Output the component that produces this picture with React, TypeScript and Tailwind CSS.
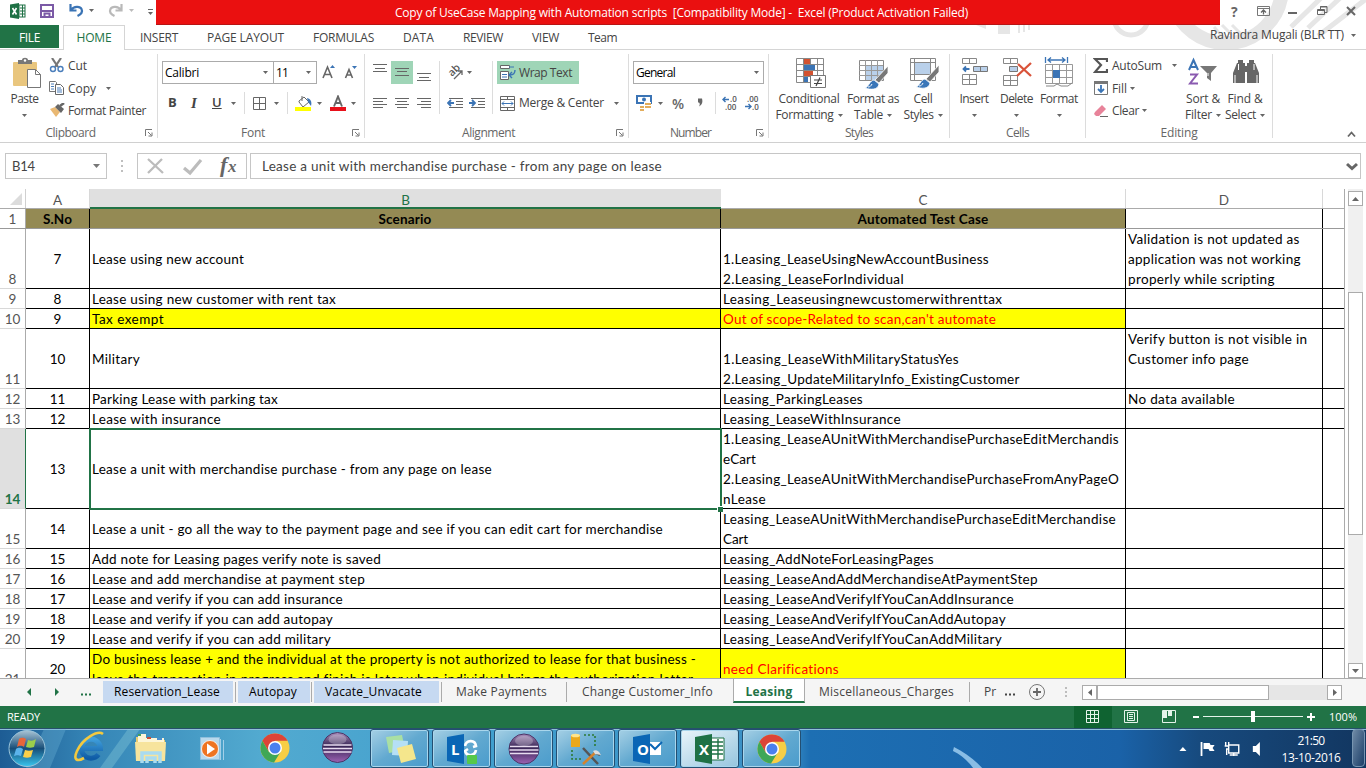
import { useLayoutEffect, useRef, useState } from "react";
import type { ReactNode } from "react";

const UI = "font-['Open_Sans','Noto_Sans',sans-serif]";
const CELL = "font-[Lato,'Open_Sans',sans-serif]";

/* A run of text whose tracking is adjusted so that it fills exactly `w` pixels. */
function T({ w, children, className = "" }: { w: number; children: string; className?: string }) {
  const ref = useRef<HTMLSpanElement>(null);
  const [ls, setLs] = useState(0);
  useLayoutEffect(() => {
    if (ref.current) setLs((w - ref.current.getBoundingClientRect().width) / children.length);
  }, []);
  return (
    <span ref={ref} className={`inline-block shrink-0 whitespace-pre ${className}`} style={{ letterSpacing: ls }}>
      {children}
    </span>
  );
}

/* Icon canvas: coordinates inside are window pixels. */
function Ic({ x, y, w, h, c = "", children }: { x: number; y: number; w: number; h: number; c?: string; children: ReactNode }) {
  return (
    <svg className={`block shrink-0 ${c}`} width={w} height={h} viewBox={`${x} ${y} ${w} ${h}`} fill="none">
      {children}
    </svg>
  );
}

const Arrow = ({ c = "" }: { c?: string }) => (
  <svg className={`block shrink-0 ${c}`} width="5" height="3" viewBox="0 0 5 3"><path d="M0 0h5L2.5 3z" fill="#666" /></svg>
);
const Sep = ({ c = "" }: { c?: string }) => <div className={`h-[22px] w-px shrink-0 bg-[#dcdcdc] ${c}`} />;

function Group({ label, w, c, launch, children }: { label: string; w: number; c: string; launch?: boolean; children: ReactNode }) {
  return (
    <div className={`flex h-full shrink-0 pt-1 ${c}`}>
      <div className="flex min-w-0 flex-1 flex-col">
        <div className="h-[71px]">{children}</div>
        <div className="mt-px flex h-[18px] items-center text-[#666]">
          <div className="flex flex-1 justify-center"><T w={w}>{label}</T></div>
          {launch && (
            <svg className="mx-1 shrink-0" width="8" height="8" viewBox="0 0 8 8" fill="none" stroke="#777"><path d="M.5 7V.5H7M3 3l3.500 3.500M7 3.500V7H3.500" /></svg>
          )}
        </div>
      </div>
      <div className="h-[84px] w-px bg-[#dcdcdc]" />
    </div>
  );
}

function Lines({ x, y, rows, c = "" }: { x: number; y: number; rows: number[][]; c?: string }) {
  return (
    <Ic x={x} y={y} w={14} h={14} c={c}>
      {rows.map(([a, b, yy], i) => <rect key={i} x={x + a} y={y + yy} width={b} height="1" fill="#666" />)}
    </Ic>
  );
}

function Big({ c, icon, a, aw, b, bw }: { c: string; icon: ReactNode; a: string; aw: number; b?: string; bw?: number }) {
  return (
    <div className={`flex shrink-0 flex-col items-center ${c}`}>
      <div className="flex h-[37px] items-end pb-[2px]">{icon}</div>
      <div className="flex h-4 items-center"><T w={aw}>{a}</T></div>
      <div className="flex h-4 items-center gap-1">
        {b && <T w={bw || 0}>{b}</T>}
        <Arrow />
      </div>
    </div>
  );
}

function Brush({ x, y }: { x: number; y: number }) {
  return (
    <g transform={`translate(${x} ${y})`}>
      <path d="M21 0v7l-9 10-4-3z" fill="#777" stroke="#fff" strokeWidth=".8" />
      <path d="M7 14l5 4c-1 6-8 6-14 4 4-1 4-7 9-8z" fill="#3a76b8" stroke="#fff" strokeWidth=".8" />
      <path d="M5 18c-1 2-2 3-4 3" stroke="#fff" />
    </g>
  );
}

function TitleBar() {
  return (
    <div className="flex h-[25px]">
      <Ic x={0} y={0} w={156} h={25}>
        <path d="M10 4.500L19 3v16l-9-1.500z" fill="#1e7145" />
        <rect x="19" y="5" width="6" height="12" stroke="#1e7145" fill="#fff" />
        <path d="M20 8h5M20 11h5M20 14h5M22.500 5v12" stroke="#1e7145" />
        <path d="M12.500 8l4 6.500M16.500 8l-4 6.500" stroke="#fff" strokeWidth="1.600" />
        <path d="M41 5h12v12H41z" stroke="#7b5aa6" strokeWidth="2" />
        <path d="M41 11h12M44.500 17v-3.500h5V17" stroke="#7b5aa6" strokeWidth="2" />
        <path d="M70.500 4v6.500h6M71 10c3-4 9-4 10.500-1 1.500 3 0 5-4 7" stroke="#3b74b5" strokeWidth="2.200" />
        <path d="M89 9h5l-2.500 3z" fill="#666" />
        <path d="M121.500 4v6.500h-6M121 10c-3-4-9-4-10.500-1-1.500 3 0 5 4 7" stroke="#b9b9b9" strokeWidth="2.200" />
        <path d="M129 9h5l-2.500 3z" fill="#bbb" />
        <path d="M148 9.500h5" stroke="#666" /><path d="M148 12h5l-2.500 3z" fill="#666" />
      </Ic>
      <div className="flex w-[1064px] items-center justify-center border-b border-[#b81414] bg-[#ea1010] pt-[2px] text-white">
        <T w={573} className="mr-[13px]">{"Copy of UseCase Mapping with Automation scripts  [Compatibility Mode] -  Excel (Product Activation Failed)"}</T>
      </div>
      <Ic x={1220} y={0} w={146} h={25}>
        <text x="1231" y="16.500" fontSize="14" fontWeight="700" fill="#666" fontFamily="Open Sans">?</text>
        <path d="M1257.500 6.500h12v9h-12zM1257 8.500h13" stroke="#777" />
        <path d="M1263.500 14.500v-4M1261 12.500l2.500-2.500 2.500 2.500" stroke="#666" strokeWidth="1.300" />
        <path d="M1288 13h9" stroke="#666" strokeWidth="2" />
        <path d="M1317.500 9.500h7v5h-7zM1317 10.500h8M1320.500 9V6.500h6.500v6h-2M1320 7h7" stroke="#666" />
        <path d="M1347 7l8 8M1355 7l-8 8" stroke="#666" strokeWidth="2" />
      </Ic>
    </div>
  );
}

const menu: [string, number, string][] = [
  ["INSERT", 38, "ml-[15px]"], ["PAGE LAYOUT", 77, "ml-[29px]"], ["FORMULAS", 61, "ml-[29px]"],
  ["DATA", 31, "ml-[29px]"], ["REVIEW", 40, "ml-[29px]"], ["VIEW", 27, "ml-[29px]"], ["Team", 29, "ml-[29px]"],
];

function MenuRow() {
  return (
    <div className="flex h-[25px] items-center border-b border-[#d5d5d5] pt-px">
      <div className="-mt-px flex h-full w-[59px] items-center justify-center self-start bg-[#217346] pt-[2px] text-white"><T w={21}>FILE</T></div>
      <div className="z-10 -mt-px ml-1 flex h-[25px] w-[62px] shrink-0 items-center justify-center self-start border border-b-0 border-[#d5d5d5] bg-white text-[#217346]"><T w={35}>HOME</T></div>
      {menu.map(([t, w, c]) => <T key={t} w={w} className={c}>{t}</T>)}
      <div className="flex flex-1 items-center justify-end pb-[5px]">
        <T w={134}>Ravindra Mugali (BLR TT)</T>
        <Arrow c="ml-[7px] mr-[10px]" />
      </div>
    </div>
  );
}

function Ribbon() {
  return (
    <div className="flex h-[93px] border-b border-[#d0d0d0]">
      <Group label="Clipboard" w={50} c="w-[158px]" launch>
        <div className="flex">
          <Big c="w-[49px]" a="Paste" aw={28} icon={
            <Ic x={12} y={57} w={30} h={32} c="ml-1">
              <rect x="13" y="62" width="24" height="24" rx="1" fill="#e9c67e" />
              <path d="M18 64v-4h4c0-3 6-3 6 0h4v4z" fill="#777" /><circle cx="25" cy="60.500" r="1.200" fill="#fff" />
              <path d="M27.500 69.500h8l5 5v13h-13z" fill="#fff" stroke="#777" /><path d="M35.500 69.500v5h5" stroke="#777" />
            </Ic>} />
          <div className="flex flex-col">
            <div className="flex h-[23px] items-center">
              <Ic x={49} y={57} w={15} h={15}>
                <path d="M52 57l6 9M61 57l-6 9" stroke="#777" strokeWidth="2.200" />
                <circle cx="53" cy="68" r="2.500" stroke="#4a7ebb" strokeWidth="1.400" /><circle cx="60.500" cy="68" r="2.500" stroke="#4a7ebb" strokeWidth="1.400" />
              </Ic>
              <T w={19} className="ml-1">Cut</T>
            </div>
            <div className="flex h-[23px] items-center">
              <Ic x={49} y={80} w={15} h={15}>
                <path d="M49.500 80.500h6l1 1v9h-7z" fill="#fff" stroke="#777" /><path d="M51 83h3M51 85.500h3M51 88h3" stroke="#4a7ebb" />
                <path d="M55.500 83.500h5l3 3v7h-8z" fill="#fff" stroke="#666" /><path d="M57 87h4M57 89h5M57 91h5" stroke="#4a7ebb" />
              </Ic>
              <T w={28} className="ml-1">Copy</T><Arrow c="ml-[10px]" />
            </div>
            <div className="-mt-px flex h-[23px] items-center">
              <Ic x={49} y={103} w={16} h={15}>
                <path d="M50 109l5-2 5 5-4 5z" fill="#e9b873" /><path d="M55 107l3-3 6 5-3 4z" fill="#666" /><path d="M60 106l4-3" stroke="#666" strokeWidth="2.500" />
              </Ic>
              <T w={78} className="ml-[3px]">Format Painter</T>
            </div>
          </div>
        </div>
      </Group>

      <Group label="Font" w={24} c="w-[207px]" launch>
        <div className="flex h-full flex-col pt-[7px]">
          <div className="ml-1 flex h-[23px]">
            <div className="flex w-[112px] items-center justify-between border border-[#ababab] bg-white pr-[5px] pl-[2px] text-black"><T w={34}>Calibri</T><Arrow /></div>
            <div className="-ml-px flex w-[44px] items-center justify-between border border-[#ababab] bg-white pr-[5px] pl-[2px] text-black"><T w={12}>11</T><Arrow /></div>
            <Ic x={322} y={61} w={36} h={22} c="ml-[5px]">
              <path d="M323 78l4.500-11 4.500 11M324.500 74.500h6.500" stroke="#666" strokeWidth="1.600" /><path d="M330 68l2.500-3 2.500 3z" fill="#3b74b5" />
              <path d="M345.500 78l3.500-8.500 3.500 8.500M347 75h4.500" stroke="#666" strokeWidth="1.600" /><path d="M352 66h5l-2.500 3z" fill="#3b74b5" />
            </Ic>
          </div>
          <div className="mt-2 flex h-[22px] items-center">
            <span className="ml-[10px] w-[22px] text-[13px] font-bold">B</span>
            <span className="w-[22px] pl-px font-['Liberation_Serif',serif] text-[15px] font-bold italic">I</span>
            <span className="w-[18px] text-[13px] font-semibold underline">U</span>
            <Arrow c="ml-[1px]" /><Sep c="ml-[8px]" />
            <Ic x={252} y={96} w={15} h={15} c="ml-[7px]"><path d="M253.500 97.500h12v12h-12zM259.500 97v13M253 103.500h13" stroke="#666" /></Ic>
            <Arrow c="ml-[7px]" /><Sep c="ml-[8px]" />
            <Ic x={295} y={95} w={18} h={17} c="ml-[7px]">
              <path d="M299 101l5-4 5 5-6 5-4-5zM302 101v-5" fill="#fff" stroke="#666" /><path d="M307 98c4 1 5 4 4 8l-3-4z" fill="#3b74b5" /><rect x="295" y="107" width="16" height="4" fill="#ff0" />
            </Ic>
            <Arrow c="ml-[4px]" />
            <Ic x={329} y={95} w={16} h={17} c="ml-[8px]"><path d="M333 106.500l4-10 4 10M334.500 103h5" stroke="#666" strokeWidth="1.900" /><rect x="329" y="107" width="16" height="4" fill="#e8101a" /></Ic>
            <Arrow c="ml-[5px]" />
          </div>
        </div>
      </Group>

      <Group label="Alignment" w={53} c="w-[264px]" launch>
        <div className="flex h-full pt-[7px]">
          <div className="flex w-[74px] flex-col">
            <div className="flex h-[23px]">
              <Lines c="ml-2" x={373} y={61} rows={[[0, 14, 3], [2, 10, 7], [0, 14, 10]]} />
              <div className="ml-1 flex w-[22px] justify-center bg-[#9fd5b7] pt-[6px]"><Lines x={0} y={0} rows={[[0, 14, 1], [2, 10, 4], [0, 14, 8]]} /></div>
              <Lines c="ml-1 mt-2" x={417} y={61} rows={[[0, 14, 4], [2, 10, 8], [0, 14, 11]]} />
            </div>
            <div className="mt-2 flex h-[22px] items-center gap-2 pl-2">
              <Lines x={0} y={0} rows={[[0, 14, 2], [0, 10, 5], [0, 14, 8], [0, 10, 11]]} />
              <Lines x={0} y={0} rows={[[0, 14, 2], [2, 10, 5], [0, 14, 8], [2, 10, 11]]} />
              <Lines x={0} y={0} rows={[[0, 14, 2], [4, 10, 5], [0, 14, 8], [4, 10, 11]]} />
            </div>
          </div>
          <div className="h-[53px] w-px bg-[#dcdcdc]" />
          <div className="flex w-[52px] flex-col">
            <div className="flex h-[23px] items-center">
              <Ic x={446} y={61} w={20} h={23} c="ml-[6px]">
                <text x="0" y="0" transform="translate(452 77) rotate(-45)" fontSize="10.500" fontWeight="600" fill="#555" fontFamily="Open Sans">ab</text>
                <path d="M454 79l8-8M462 75v-4h-4" stroke="#666" strokeWidth="1.300" />
              </Ic><Arrow c="ml-[1px]" />
            </div>
            <div className="mt-2 flex h-[22px] items-center gap-[6px] pl-[7px]">
              <Ic x={447} y={96} w={16} h={14}><path d="M449 98.500h14M456 101.500h7M456 104.500h7M449 107.500h14" stroke="#666" /><path d="M448 103h6M451 100l-3 3 3 3" stroke="#3b74b5" strokeWidth="1.800" /></Ic>
              <Ic x={469} y={96} w={16} h={14}><path d="M471 98.500h14M478 101.500h7M478 104.500h7M471 107.500h14" stroke="#666" /><path d="M469 103h6M472 100l3 3-3 3" stroke="#3b74b5" strokeWidth="1.800" /></Ic>
            </div>
          </div>
          <div className="h-[53px] w-px bg-[#dcdcdc]" />
          <div className="ml-1 flex flex-col">
            <div className="flex h-[23px] w-[82px] items-center bg-[#9fd5b7] pl-[3px]">
              <Ic x={500} y={63} w={16} h={17}>
                <path d="M500.500 64.500h9v3h-9zM500.500 70.500h8v8h-8z" fill="#fff" stroke="#666" /><path d="M509 66h5M502 73.500h5M502 76h5" stroke="#3b74b5" />
                <path d="M515 69c0 4-2 5-5 5M512 71l-3 3 3 3" stroke="#3b74b5" strokeWidth="1.400" />
              </Ic>
              <T w={53} className="ml-[3px]">Wrap Text</T>
            </div>
            <div className="mt-2 flex h-[22px] items-center pl-[3px]">
              <Ic x={500} y={95} w={16} h={15}>
                <path d="M500.500 95.500h14v14h-14zM500 98.500h15M500 106.500h15M507.500 95v4M507.500 106v4" stroke="#666" /><path d="M502 102.500h11M504 100.500l-2 2 2 2M511 100.500l2 2-2 2" stroke="#3b74b5" />
              </Ic>
              <T w={85} className="ml-[3px]">{"Merge & Center"}</T><Arrow c="ml-[10px]" />
            </div>
          </div>
        </div>
      </Group>

      <Group label="Number" w={41} c="w-[140px]" launch>
        <div className="flex h-full flex-col pt-[7px]">
          <div className="ml-1 flex h-[23px] w-[131px] items-center justify-between border border-[#ababab] bg-white pr-1 pl-[2px] text-black"><T w={39}>General</T><Arrow /></div>
          <div className="mt-2 flex h-[22px] items-center">
            <Ic x={636} y={95} w={17} h={16} c="ml-[7px]">
              <path d="M637 96h14v7h-14z" stroke="#3b74b5" strokeWidth="2" /><circle cx="644" cy="99.500" r="2" fill="#3b74b5" />
              <path d="M644 103.500h7M645 106.500h6" stroke="#fff" strokeWidth="3" /><path d="M645 104h6M645 107h6M640 107h4M640 110h4" stroke="#e3ad5c" strokeWidth="2" />
            </Ic>
            <Arrow c="ml-[5px]" />
            <span className="ml-[9px] w-[24px] text-[14px] font-semibold text-[#666]">%</span>
            <Ic x={696} y={97} w={7} h={12}><path d="M698 98.500h4c1 4 0 6-3 8 1-2 1-3 0-4h-1z" fill="#666" /></Ic>
            <Sep c="ml-[12px]" />
            <div className="ml-[6px] flex gap-[7px]">
              <Ic x={722} y={94} w={16} h={18}>
                <g fontSize="8" fontWeight="600" fill="#555" fontFamily="Open Sans"><text x="730" y="102">.0</text><text x="725" y="110">.00</text></g>
                <path d="M723 99.500h6M725.500 97l-2.500 2.500 2.500 2.500" stroke="#3b74b5" strokeWidth="1.400" />
              </Ic>
              <Ic x={745} y={94} w={16} h={18}>
                <g fontSize="8" fontWeight="600" fill="#555" fontFamily="Open Sans"><text x="747" y="102">.00</text><text x="752" y="110">.0</text></g>
                <path d="M745 106.500h6M748.500 104l2.500 2.500-2.500 2.500" stroke="#3b74b5" strokeWidth="1.400" />
              </Ic>
            </div>
          </div>
        </div>
      </Group>

      <Group label="Styles" w={28} c="w-[181px]">
        <div className="flex">
          <Big c="ml-[3px] w-[74px]" a="Conditional" aw={61} b="Formatting" bw={58} icon={
            <Ic x={795} y={57} w={30} h={32} c="mr-px ml-1">
              <path d="M795.500 58.500h27v24h-27zM795 64.500h28M795 70.500h28M795 76.500h28M802.500 58v25M809.500 58v25M816.500 58v25" stroke="#888" fill="#fff" />
              <path d="M803 59h6v5h-6zM803 71h9v5h-9z" fill="#d35230" /><path d="M803 65h11v5h-11zM803 77h4v5h-4z" fill="#3b74b5" />
              <path d="M809.500 75.500h15v12h-15z" fill="#fff" stroke="#777" /><path d="M813 80h8M813 83.500h8M819 77.500l-4 8.500" stroke="#444" strokeWidth="1.200" />
            </Ic>} />
          <Big c="ml-px w-[52px]" a="Format as" aw={52} b="Table" bw={29} icon={
            <Ic x={859} y={57} w={31} h={32}>
              <path d="M860.500 60.500h24v20h-24z" fill="#fff" stroke="#888" /><path d="M866 66h18v14h-18z" fill="#b9d0ea" />
              <path d="M860 65.500h24M860 70.500h24M860 75.500h24M866.500 60v20M872.500 60v20M878.500 60v20" stroke="#999" /><Brush x={868} y={66} />
            </Ic>} />
          <Big c="w-[48px]" a="Cell" aw={19} b="Styles" bw={30} icon={
            <Ic x={909} y={57} w={31} h={32} c="ml-[2px]">
              <path d="M910.500 58.500h25v22h-25zM910 62.500h25M910 74.500h25M914.500 58v22M930.500 58v22" fill="#fff" stroke="#888" /><path d="M915 63h15v11h-15z" fill="#b9d0ea" /><Brush x={918} y={65} />
            </Ic>} />
        </div>
      </Group>

      <Group label="Cells" w={23} c="w-[136px]">
        <div className="flex">
          <Big c="ml-[4px] w-[40px]" a="Insert" aw={29} icon={
            <Ic x={961} y={57} w={28} h={32} c="ml-[2px]">
              <path d="M962.500 58.500h14v5h-14zM969.500 58v5M962.500 74.500h14v10h-14zM962 79.500h14M969.500 74v10" stroke="#888" /><path d="M973.500 66.500h14v5h-14zM980.500 66v6" fill="#b9d0ea" stroke="#777" />
              <path d="M963.500 69h6M966 66.500l-2.500 2.500 2.500 2.500" stroke="#3b74b5" strokeWidth="1.800" />
            </Ic>} />
          <Big c="ml-px w-[43px]" a="Delete" aw={33} icon={
            <Ic x={1003} y={57} w={30} h={32} c="ml-[2px]">
              <path d="M1003.500 58.500h14v5h-14zM1010.500 58v5M1003.500 75.500h14v10h-14zM1003 80.500h14M1010.500 75v10" stroke="#888" /><path d="M1009.500 66.500h8v5h-8z" fill="#b9d0ea" stroke="#777" />
              <path d="M1018 64l13 12M1031 63l-14 13" stroke="#d9533a" strokeWidth="2.300" />
            </Ic>} />
          <Big c="w-[42px]" a="Format" aw={38} icon={
            <Ic x={1044} y={56} w={30} h={33}>
              <path d="M1045.500 57v6M1067.500 57v6M1048 60h17M1051 57.500l-3 2.500 3 2.500M1062 57.500l3 2.500-3 2.500" stroke="#3b74b5" strokeWidth="1.300" />
              <path d="M1045.500 64.500h27v19h-27zM1045 70.500h27M1045 77.500h27M1052.500 64v19M1059.500 64v19M1066.500 64v19" stroke="#999" /><path d="M1053 70h7v8h-7z" fill="#3b74b5" /><path d="M1046 86h8l3-2 4 2h7l4-3" stroke="#888" />
            </Ic>} />
        </div>
      </Group>

      <Group label="Editing" w={37} c="w-[187px]">
        <div className="flex">
          <div className="flex w-[92px] flex-col pl-[7px]">
            <div className="flex h-[23px] items-center">
              <Ic x={1093} y={57} w={15} h={15}><path d="M1107 61v-3h-12l6 6-6 7h12v-3" stroke="#555" strokeWidth="2.200" /></Ic>
              <T w={50} className="ml-1">AutoSum</T><Arrow c="ml-[10px]" />
            </div>
            <div className="flex h-[23px] items-center">
              <Ic x={1094} y={80} w={14} h={15} c="ml-px"><path d="M1094.500 80.500h13v13h-13z" stroke="#777" /><path d="M1094 80h14v3h-14z" fill="#777" /><path d="M1101 84v7M1098 88l3 3 3-3" stroke="#3b74b5" strokeWidth="1.800" /></Ic>
              <T w={15} className="ml-[4px]">Fill</T><Arrow c="ml-[3px]" />
            </div>
            <div className="-mt-px flex h-[23px] items-center">
              <Ic x={1094} y={103} w={14} h={14} c="ml-px"><path d="M1095 111l7-7 4 4-7 7h-3l-2-2z" fill="#e8839a" /><path d="M1100 115.500h8" stroke="#666" /></Ic>
              <T w={27} className="ml-[4px]">Clear</T><Arrow c="ml-[3px]" />
            </div>
          </div>
          <Big c="w-[50px]" a="Sort &" aw={34} b="Filter" bw={27} icon={
            <Ic x={1188} y={57} w={31} h={32}>
              <path d="M1189 70l4.500-10 4.500 10M1190.500 67h6" stroke="#3b74b5" strokeWidth="2" /><path d="M1190 74.500h7l-7 9h8" stroke="#8a5ab0" strokeWidth="2" />
              <path d="M1200 66h17l-6 7v8l-4-3v-5z" fill="#777" /><path d="M1208 73v3" stroke="#fff" />
            </Ic>} />
          <Big c="w-[34px]" a="Find &" aw={35} b="Select" bw={31} icon={
            <Ic x={1233} y={57} w={27} h={28} c="ml-[2px] mb-1">
              <path d="M1233 83V73l4-10h8v20zM1247 83V63h8l4 10v10zM1243 66h6v6h-6zM1238 60h5v3h-5zM1249 60h5v3h-5z" fill="#666" /><path d="M1235 83v-8M1238.500 70v-6M1254 70v-6M1257 83v-8" stroke="#fff" />
            </Ic>} />
        </div>
      </Group>
      <div className="flex flex-1 items-end justify-end pb-1 pr-[10px]">
        <svg width="9" height="7" viewBox="0 0 9 7" fill="none" stroke="#666" strokeWidth="1.800"><path d="M1 5.500l3.500-4 3.500 4" /></svg>
      </div>
    </div>
  );
}

function FormulaBar() {
  return (
    <div className={`flex h-[46px] pt-[10px] text-[#444] ${CELL}`}>
      <div className="ml-[5px] flex h-[26px] w-[102px] items-center justify-between border border-[#c6c6c6] px-[6px]">
        <T w={23} className="pt-px text-[13px]">B14</T>
        <svg width="7" height="4" viewBox="0 0 7 4"><path d="M0 0h7L3.500 4z" fill="#777" /></svg>
      </div>
      <Ic x={107} y={153} w={30} h={26}><path d="M122 160v2M122 165v2M122 170v2" stroke="#aaa" strokeWidth="1.500" /></Ic>
      <div className="flex h-[26px] w-[110px] border border-[#c6c6c6]">
        <Ic x={138} y={154} w={108} h={24}>
          <path d="M148 159l15 14M162 159l-14 14" stroke="#bcbcbc" strokeWidth="2.300" /><path d="M184 168l6 5 11-13" stroke="#bcbcbc" strokeWidth="3.200" />
          <text x="220" y="172" fontSize="22" fontWeight="700" fontStyle="italic" fill="#666" fontFamily="Liberation Serif">f</text>
          <text x="228" y="172" fontSize="17" fontWeight="700" fontStyle="italic" fill="#666" fontFamily="Liberation Serif">x</text>
        </Ic>
      </div>
      <div className="ml-[3px] flex h-[26px] w-[1111px] items-center justify-between border border-[#c6c6c6] pl-[11px] pr-[2px] text-[13.500px]">
        <T w={400}>Lease a unit with merchandise purchase - from any page on lease</T>
        <svg width="12" height="9" viewBox="0 0 12 9" fill="none" stroke="#666" strokeWidth="3"><path d="M1 2l5 4.500 5-4.500" /></svg>
      </div>
    </div>
  );
}

type L = [string, number];
type Row = { n: string; h: string; a: string; b: L[]; c: L[]; d?: L[]; y?: boolean; sel?: boolean };
const rows: Row[] = [
  { n: "8", h: "h-[60px]", a: "7", b: [["Lease using new account", 152]], c: [["1.Leasing_LeaseUsingNewAccountBusiness", 266], ["2.Leasing_LeaseForIndividual", 181]], d: [["Validation is not updated as", 172], ["application was not working", 173], ["properly while scripting", 147]] },
  { n: "9", h: "h-[20px]", a: "8", b: [["Lease using new customer with rent tax", 244]], c: [["Leasing_Leaseusingnewcustomerwithrenttax", 279]] },
  { n: "10", h: "h-[20px]", a: "9", b: [["Tax exempt", 72]], c: [["Out of scope-Related to scan,can't automate", 273]], y: true },
  { n: "11", h: "h-[60px]", a: "10", b: [["Military", 48]], c: [["1.Leasing_LeaseWithMilitaryStatusYes", 236], ["2.Leasing_UpdateMilitaryInfo_ExistingCustomer", 297]], d: [["Verify button is not visible in", 179], ["Customer info page", 121]] },
  { n: "12", h: "h-[20px]", a: "11", b: [["Parking Lease with parking tax", 186]], c: [["Leasing_ParkingLeases", 140]], d: [["No data available", 107]] },
  { n: "13", h: "h-[20px]", a: "12", b: [["Lease with insurance", 129]], c: [["Leasing_LeaseWithInsurance", 178]] },
  { n: "14", h: "h-[80px]", a: "13", b: [["Lease a unit with merchandise purchase - from any page on lease", 400]], c: [["1.Leasing_LeaseAUnitWithMerchandisePurchaseEditMerchandis", 396], ["eCart", 33], ["2.Leasing_LeaseAUnitWithMerchandisePurchaseFromAnyPageO", 396], ["nLease", 43]], sel: true },
  { n: "15", h: "h-[40px]", a: "14", b: [["Lease a unit - go all the way to the payment page and see if you can edit cart for merchandise", 571]], c: [["Leasing_LeaseAUnitWithMerchandisePurchaseEditMerchandise", 393], ["Cart", 25]] },
  { n: "16", h: "h-[20px]", a: "15", b: [["Add note for Leasing pages verify note is saved", 289]], c: [["Leasing_AddNoteForLeasingPages", 211]] },
  { n: "17", h: "h-[20px]", a: "16", b: [["Lease and add merchandise at payment step", 273]], c: [["Leasing_LeaseAndAddMerchandiseAtPaymentStep", 315]] },
  { n: "18", h: "h-[20px]", a: "17", b: [["Lease and verify if you can add insurance", 251]], c: [["Leasing_LeaseAndVerifyIfYouCanAddInsurance", 291]] },
  { n: "19", h: "h-[20px]", a: "18", b: [["Lease and verify if you can add autopay", 241]], c: [["Leasing_LeaseAndVerifyIfYouCanAddAutopay", 283]] },
  { n: "20", h: "h-[20px]", a: "19", b: [["Lease and verify if you can add military", 239]], c: [["Leasing_LeaseAndVerifyIfYouCanAddMilitary", 279]] },
  { n: "21", h: "h-[40px]", a: "20", b: [["Do business lease + and the individual at the property is not authorized to lease for that business -", 604], ["leave the transaction in progress and finish is later when individual brings the authorization letter", 601]], c: [["need Clarifications", 116]], y: true },
];

function Cell({ lines, c, k }: { lines?: L[]; c: string; k: string }) {
  return (
    <div className={`flex shrink-0 flex-col border-r border-b border-black pl-[2px] ${c}`}>
      {lines?.map(([t, w]) => <div key={t} className="-mb-px mt-px flex h-[20px] shrink-0 items-center first:mt-0 [&+&]:mt-px"><T w={w} className={k}>{t}</T></div>)}
    </div>
  );
}

function Sheet() {
  return (
    <div className={`flex h-[489px] text-[13.500px] leading-[20px] text-black ${CELL}`}>
      <div className="relative flex w-[1345px] flex-col overflow-hidden border-r border-[#ababab]">
        <div className="flex h-[20px] shrink-0 border-b border-[#ababab] text-center leading-[22px] text-[#555]">
          <div className="flex w-[26px] justify-end border-r border-[#d0d0d0] pr-[3px] pt-[4px]"><svg width="12" height="12"><path d="M12 0v12H0z" fill="#dcdcdc" /></svg></div>
          <div className="w-[64px] border-r border-[#d8d8d8]">A</div>
          <div className="-mb-px h-[20px] w-[631px] border-b-2 border-[#217346] bg-[#e0e0e0] text-[#217346]">B</div>
          <div className="w-[405px] border-r border-[#d8d8d8]">C</div>
          <div className="w-[197px] border-r border-[#d8d8d8]">D</div>
        </div>
        <div className="flex h-[20px] shrink-0 border-b border-[#999] text-center font-bold leading-[21px]">
          <div className="w-[26px] border-r border-[#ababab] font-normal text-[#555]">1</div>
          <div className="w-[64px] border-r border-black bg-[#948a54]"><T w={29}>S.No</T></div>
          <div className="w-[631px] border-r border-black bg-[#948a54]"><T w={53}>Scenario</T></div>
          <div className="w-[405px] border-r border-black bg-[#948a54]"><T w={131}>Automated Test Case</T></div>
          <div className="w-[197px] border-r border-black" />
        </div>
        {rows.map((r) => {
          const bg = r.y ? "bg-[#ffff00]" : "bg-white";
          return (
            <div key={r.n} className={`flex shrink-0 ${r.h}`}>
              <div className={`flex w-[26px] items-end justify-center border-r border-b border-b-[#d8d8d8] ${r.sel ? "border-r-[#217346] bg-[#e0e0e0] font-bold text-[#217346]" : "border-r-[#ababab] text-[#555]"}`}><span className="-mb-px">{r.n}</span></div>
              <div className="flex w-[64px] items-center justify-center border-r border-b border-black"><span className="pt-px">{r.a}</span></div>
              <Cell lines={r.b} k="" c={`w-[631px] justify-center ${bg}`} />
              <Cell lines={r.c} k={r.y ? "text-[#ff0000]" : ""} c={`w-[405px] ${r.n === "21" ? "justify-center" : "justify-end"} ${bg}`} />
              <Cell lines={r.d} k="" c="w-[197px]" />
              <div className="flex-1 border-b border-black" />
            </div>
          );
        })}
        <div className="absolute top-[239px] left-[89px] h-[82px] w-[633px] border-2 border-[#217346]" />
        <div className="absolute top-[317px] left-[717px] size-[6px] border-t border-l border-white bg-[#217346]" />
      </div>
      <div className="ml-[3px] flex w-[15px] flex-col bg-[#f0f0f0] pt-[2px]">
        <div className="flex h-[15px] shrink-0 items-center justify-center border border-[#ababab] bg-white"><svg width="7" height="4"><path d="M0 4h7L3.500 0z" fill="#666" /></svg></div>
        <div className="mt-[86px] h-[243px] border border-[#ababab] bg-white" />
        <div className="flex-1" />
        <div className="flex h-[15px] shrink-0 items-center justify-center border border-[#ababab] bg-white"><svg width="7" height="4"><path d="M0 0h7L3.500 4z" fill="#666" /></svg></div>
      </div>
    </div>
  );
}

const Div = ({ c }: { c: string }) => <div className={`h-5 w-px shrink-0 bg-[#ababab] ${c}`} />;

function SheetTabs() {
  const blue = "flex h-[22px] shrink-0 items-center bg-[#c6d9f1] text-black";
  return (
    <div className="flex h-[28px] items-center border-t border-[#ababab] bg-[#f5f5f5] pb-px text-[#444]">
      <Ic x={0} y={679} w={102} h={26}><path d="M31 688v8l-4-4zM55 688v8l4-4z" fill="#217346" /><path d="M81 694.500h2M85 694.500h2M89 694.500h2" stroke="#217346" strokeWidth="2" /></Ic>
      <div className={`${blue} ml-px w-[130px] pl-[11px]`}><T w={106}>Reservation_Lease</T></div>
      <Div c="ml-[2px] mr-[2px]" />
      <div className={`${blue} w-[72px] pl-[11px]`}><T w={48}>Autopay</T></div>
      <Div c="ml-[1px] mr-[2px]" />
      <div className={`${blue} w-[125px] pl-[11px]`}><T w={97}>Vacate_Unvacate</T></div>
      <Div c="ml-[2px]" />
      <T w={91} className="ml-[14px]">Make Payments</T>
      <Div c="ml-[19px]" />
      <T w={131} className="ml-[15px]">Change Customer_Info</T>
      <div className="ml-[20px] flex h-[24px] w-[72px] shrink-0 items-center justify-center self-start border-x border-b-2 border-x-[#ababab] border-b-[#217346] bg-white pt-[3px] font-bold text-[#217346]"><T w={47}>Leasing</T></div>
      <T w={135} className="ml-[14px]">Miscellaneous_Charges</T>
      <Div c="ml-[15px]" />
      <T w={12} className="ml-[14px]">Pr</T>
      <Ic x={996} y={679} w={86} h={26}>
        <path d="M1005 694.500h2M1009 694.500h2M1013 694.500h2" stroke="#444" strokeWidth="2" />
        <circle cx="1037" cy="692" r="7.500" stroke="#777" /><path d="M1033 692h8M1037 688v8" stroke="#666" strokeWidth="1.800" /><path d="M1066 687v2M1066 691v2M1066 695v2" stroke="#aaa" strokeWidth="1.500" />
      </Ic>
      <div className="flex h-[15px] w-[260px] bg-[#e6e6e6]">
        <div className="flex w-[15px] items-center justify-center border border-[#ababab] bg-white"><svg width="4" height="7"><path d="M4 0v7L0 3.500z" fill="#666" /></svg></div>
        <div className="w-[172px] border border-[#ababab] bg-white" />
        <div className="flex-1" />
        <div className="flex w-[15px] items-center justify-center border border-[#ababab] bg-white"><svg width="4" height="7"><path d="M0 0v7l4-3.500z" fill="#666" /></svg></div>
      </div>
    </div>
  );
}

function StatusBar() {
  return (
    <div className="flex h-[22px] items-center bg-[#217346] text-[11px] text-white">
      <T w={33} className="ml-[7px]">READY</T>
      <div className="flex-1" />
      <div className="flex h-full w-[38px] items-center justify-center bg-[#0f6331]">
        <Ic x={1086} y={710} w={14} h={14}><path d="M1086.500 710.500h12v12h-12zM1090.500 710v13M1094.500 710v13M1086 714.500h13M1086 718.500h13" stroke="#e4f3ea" /></Ic>
      </div>
      <Ic x={1112} y={706} w={216} h={22}>
        <path d="M1124.500 710.500h13v12h-13zM1127.500 712.500h7v8h-7zM1129 714.500h4M1129 716.500h4M1129 718.500h4" stroke="#e4f3ea" />
        <path d="M1162.500 710.500h13v12h-13z" stroke="#e4f3ea" /><path d="M1163 711h4v7h-4zM1168 711h4v5h-4z" fill="#e4f3ea" />
        <path d="M1193 717h6M1307 717h8M1311 713v8" stroke="#fff" strokeWidth="2" /><path d="M1203 716.500h100" stroke="#e4f3ea" /><path d="M1251 711h4v11h-4z" fill="#fff" />
      </Ic>
      <T w={28} className="ml-[1px] mr-[9px]">100%</T>
    </div>
  );
}

const ChromeMark = () => (
  <>
    <circle r="14.500" fill="#f7ce45" />
    <path d="M-12.600-7.200A14.500 14.500 0 0 1 12.600-7.200H0L-6 4z" fill="#dc4437" />
    <path d="M-12.600-7.200A14.500 14.500 0 0 0-1 14.500L5.500 4H-6z" fill="#3fa757" />
    <circle r="7" fill="#fff" /><circle r="5.500" fill="#4a80ee" />
  </>
);
const EclipseMark = () => (
  <>
    <circle r="15" fill="url(#ec)" stroke="#4b3466" />
    <ellipse cy="-8" rx="9" ry="5" fill="#fff" opacity=".25" />
    <path d="M-14-2.500h28M-14.500 1h29M-14 4.500h28" stroke="#e8dcf0" strokeWidth="1.500" />
  </>
);
function OfficeTile({ fill, letter, children }: { fill: string; letter: string; children: ReactNode }) {
  return (
    <svg width="32" height="32" viewBox="0 0 32 32" fill="none">
      {children}
      <path d="M1 4l17-3v30L1 28z" fill={fill} /><text x="5" y="21.500" fontSize="15" fontWeight="700" fill="#fff" fontFamily="Open Sans">{letter}</text>
    </svg>
  );
}

function Taskbar() {
  const running: ReactNode[] = [
    <svg width="34" height="32" viewBox="0 0 34 32"><path d="M3 4l16-2 3 15-16 3z" fill="#a9dfa3" /><path d="M10 7l15 1-1 15-15-1z" fill="#b5dff5" /><path d="M14 15l15-4 4 15-15 4z" fill="#f5e68c" /></svg>,
    <OfficeTile fill="#0a66b5" letter="L"><path d="M19 13c1-6 10-7 11 0l-3 1M30 17c-1 6-9 7-11 1l3-2" stroke="#fff" strokeWidth="2.600" /><rect x="21" y="22" width="10" height="9" rx="1" fill="#55c84b" /></OfficeTile>,
    <svg width="32" height="32" viewBox="-16 -16 32 32"><EclipseMark /></svg>,
    <svg width="32" height="32" viewBox="0 0 32 32" fill="none"><path d="M1 2h9v12H1z" fill="#eaa81c" /><ellipse cx="5.500" cy="2.500" rx="4.500" ry="1.800" fill="#ffe48a" /><path d="M14 2h11v12M2 17v9h9" stroke="#2c7a35" strokeWidth="1.600" strokeDasharray="2 2" /><path d="M13 15l15 16M30 22l-6-3" stroke="#555" strokeWidth="2.500" /><path d="M26 19L13 31" stroke="#d5832c" strokeWidth="2.500" /><path d="M23 18c3-2 6 0 8 4l-6-1z" fill="#ddd" /></svg>,
    <OfficeTile fill="#0a66b5" letter="O"><path d="M17 9h12v13H17z" fill="#fff" /><path d="M18 11l5 5 7-7" stroke="#0a66b5" strokeWidth="2" /></OfficeTile>,
    <OfficeTile fill="#1e7145" letter="X"><path d="M17 5h13v22H17z" fill="#fff" stroke="#1e7145" /><path d="M18 9h11M18 13h11M18 17h11M18 21h11M24 6v20" stroke="#1e7145" strokeWidth="1.400" /></OfficeTile>,
    <svg width="30" height="30" viewBox="-15 -15 30 30"><ChromeMark /></svg>,
  ];
  return (
    <div className="flex h-[40px] border-t border-[#27506b] bg-[linear-gradient(90deg,#1d5c94_0px,#3585b6_90px,#52aad0_260px,#3f9dcd_520px,#3b8fc5_790px,#1d6fb3_810px,#1a62a8_1120px,#174a7e_1200px,#123660_1366px)] shadow-[inset_0_1px_0_#8fc0da]">
      <Ic x={0} y={729} w={370} h={39}>
        <defs>
          <linearGradient id="orb" x2="0" y2="1"><stop stopColor="#a9c4d5" /><stop offset=".5" stopColor="#174d78" /><stop offset="1" stopColor="#39c5ee" /></linearGradient>
          <linearGradient id="ie" x2="0" y2="1"><stop stopColor="#3f9edb" /><stop offset="1" stopColor="#0f5ca6" /></linearGradient>
          <linearGradient id="ec" x2="0" y2="1"><stop stopColor="#ab8fbd" /><stop offset=".45" stopColor="#372454" /><stop offset="1" stopColor="#9d63b4" /></linearGradient>
        </defs>
        <path d="M44 729h22L50 768H26z" fill="#6db4d8" opacity=".35" /><path d="M128 729h12l-28 39h-12z" fill="#8fd0dd" opacity=".35" />
        <circle cx="27" cy="748.500" r="18" fill="url(#orb)" stroke="#9ac4da" />
        <path d="M19 739c3-2 5-1 7 0l-2 8c-3-2-5-1-7 0z" fill="#e8663a" /><path d="M28 740c3 1 5 1 8-1l-2 8c-3 1-5 1-8 0z" fill="#9cce4b" />
        <path d="M16 749c3-2 5-1 7 0l-2 7c-3-1-4-1-7 0z" fill="#5bb3ea" /><path d="M25 750c3 1 5 1 8 0l-2 7c-3 1-5 1-8 0z" fill="#fbd04a" />
        <path d="M98.500 754.500a9.500 9.500 0 1 1 2-6H83" stroke="url(#ie)" strokeWidth="5" />
        <path d="M103 734c-5-4-20 4-26 17-4 9 0 11 7 7" stroke="#f3c93f" strokeWidth="2.600" />
        <path d="M136 737h9l2 3h18v20h-29z" fill="#e8cc72" /><path d="M138 734h8v4h18v5h-26z" fill="#fdf6d8" /><path d="M138 735h3" stroke="#45a05a" strokeWidth="2" /><path d="M147 738h4" stroke="#c9503a" strokeWidth="2" /><path d="M157 739h5" stroke="#4a8fd0" strokeWidth="2" /><path d="M135 742h31l-1 19h-29z" fill="#f7e49d" /><path d="M142 763v-10h18v10M147 763v-5h8v5" stroke="#a9dbf0" strokeWidth="3.500" />
        <path d="M220.500 739v21M223.500 740v20" stroke="#a4cfe8" /><path d="M200.500 737.500h19v22h-19z" fill="#b9d9ec" stroke="#8fc0dd" /><circle cx="210" cy="749" r="8.500" fill="#ee7421" stroke="#fff" strokeWidth=".8" /><path d="M207 743.500l8 5.500-8 5.500z" fill="#fff" />
        <g transform="translate(275 748)"><ChromeMark /></g>
        <g transform="translate(337.500 747.500)"><EclipseMark /></g>
      </Ic>
      <div className="flex gap-[3px]">
        {running.map((ic, i) => (
          <div key={i} className={`flex h-[39px] w-[59px] items-center justify-center rounded-[3px] border border-[#234f72] shadow-[inset_0_0_0_1px_#a9d6ec] ${i === 5 ? "bg-linear-to-br from-[#eaf5fa] to-[#95c5de]" : "bg-linear-to-br from-[#a5d0e5] via-[#62a9d0] to-[#4a9ccc]"}`}>{ic}</div>
        ))}
      </div>
      <svg className="block flex-1" height="39" viewBox="804 729 474 39" preserveAspectRatio="none" fill="none">
        <path d="M956 747c10 5 20 12 28 21h-9c-6-8-12-13-20-17z" fill="#a5d2f2" opacity=".8" />
        <path d="M1180 751h7l-3.500-4z" fill="#fff" />
        <path d="M1202 742v14" stroke="#fff" strokeWidth="1.800" /><path d="M1204 743h6l1 2h4l-2 3 2 3h-5l-1-2h-5z" fill="#fff" />
        <path d="M1229 745h10v8h-10zM1230 755h8M1234 753v3M1226 742v4M1229 742v3M1225 746h4v3h-2v6" stroke="#fff" strokeWidth="1.400" />
        <path d="M1253 746h3l4-4v14l-4-4h-3z" fill="#fff" />
      </svg>
      <div className="flex w-[66px] flex-col items-center pt-[3px] leading-[17px] text-white"><T w={27}>21:50</T><T w={59}>13-10-2016</T></div>
      <div className="ml-[8px] mr-px h-[38px] w-[13px] rounded-sm border border-[#7795b1] bg-linear-to-br from-[#6f8aa6] to-[#1c3f68]" />
    </div>
  );
}

export default function App() {
  return (
    <div className={`relative flex h-[768px] w-[1366px] flex-col overflow-hidden bg-white text-[12px] text-[#444] ${UI}`}>
      <svg className="absolute top-0 left-0" width="1366" height="49" fill="none">
        <g stroke="#e6e6e6">
          <circle cx="1226" cy="-13" r="56" strokeWidth="14" /><circle cx="1131" cy="18" r="17" strokeWidth="5" />
          <path d="M1291 27l30-29M1308 28l32-30M1318 36l48-37" strokeWidth="5" /><path d="M1214 27l10 11M1222 25l14 14M1232 25l10 10" strokeWidth="3" />
          <path d="M1019 25v8M1024 25v7M1029 25v5" strokeWidth="2" />
        </g>
        <path d="M998 25h12v9h-12zM976 25h10v4z" fill="#e6e6e6" />
      </svg>
      <div className="relative flex flex-col">
        <TitleBar />
        <MenuRow />
        <Ribbon />
        <FormulaBar />
        <Sheet />
        <SheetTabs />
        <StatusBar />
        <Taskbar />
      </div>
    </div>
  );
}
